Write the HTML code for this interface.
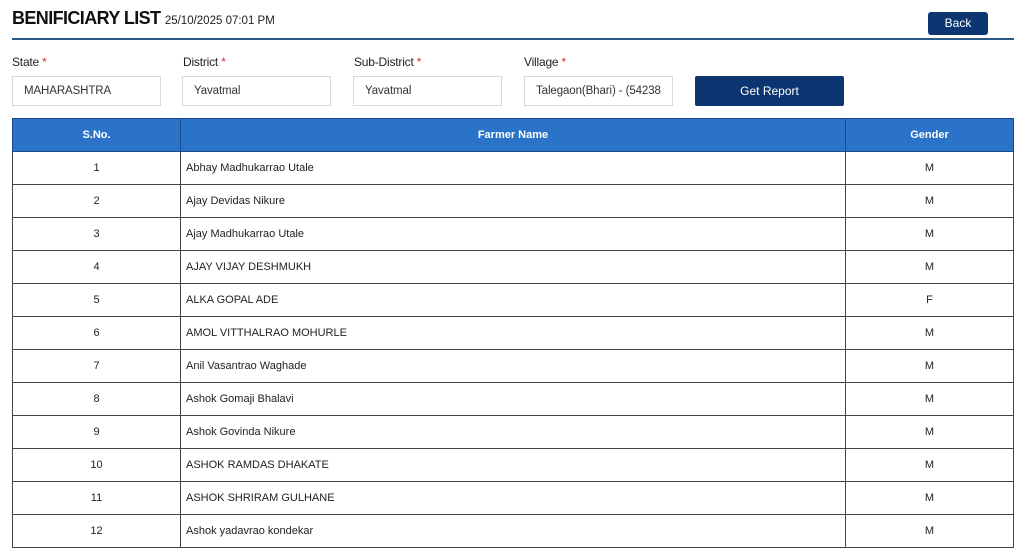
<!DOCTYPE html>
<html><head><style>
*{margin:0;padding:0;box-sizing:border-box}
body{width:1024px;height:546px;overflow:hidden;background:#fff;font-family:"Liberation Sans",Arial,sans-serif;color:#222;position:relative}
.a{position:absolute}
h1{position:absolute;left:12px;top:8px;font-size:18px;font-weight:bold;color:#111;letter-spacing:-0.6px;white-space:nowrap}
h1 span{font-size:11.5px;font-weight:normal;color:#222;letter-spacing:0}
.line{left:12px;top:38px;width:1002px;height:2px;background:#2b5a85}
.back{left:928px;top:12px;width:60px;height:23px;background:#0d3572;border-radius:3px;color:#fff;font-size:12px;text-align:center;line-height:23px}
.lbl{top:55px;font-size:12px;color:#222;letter-spacing:-0.2px}
.lbl b{color:#d33;font-weight:normal}
.inp{top:76px;width:149px;height:30px;border:1px solid #d8d8d8;font-size:11.5px;line-height:28px;padding-left:11px;color:#333;white-space:nowrap;overflow:hidden;letter-spacing:-0.1px}
.btn{left:695px;top:76px;width:149px;height:30px;background:#0d3572;border-radius:2px;color:#fff;font-size:12px;text-align:center;line-height:30px}
table{position:absolute;left:12px;top:118px;width:1002px;border-collapse:collapse;font-size:11px}
th{background:#2a73c8;color:#fff;height:33px;border:1px solid #1b4a8a;font-weight:bold}
td{height:33px;border:1px solid #444;color:#222}
td.c{text-align:center}
td.n{padding-left:5px}
</style></head><body>
<h1>BENIFICIARY LIST <span>25/10/2025 07:01 PM</span></h1>
<div class="a back">Back</div>
<div class="a line"></div>
<div class="a lbl" style="left:12px">State <b>*</b></div>
<div class="a lbl" style="left:183px">District <b>*</b></div>
<div class="a lbl" style="left:354px">Sub-District <b>*</b></div>
<div class="a lbl" style="left:524px">Village <b>*</b></div>
<div class="a inp" style="left:12px">MAHARASHTRA</div>
<div class="a inp" style="left:182px">Yavatmal</div>
<div class="a inp" style="left:353px">Yavatmal</div>
<div class="a inp" style="left:524px">Talegaon(Bhari) - (54238</div>
<div class="a btn">Get Report</div>
<table>
<tr><th style="width:168px">S.No.</th><th style="width:665px">Farmer Name</th><th>Gender</th></tr>
<tr><td class="c">1</td><td class="n">Abhay Madhukarrao Utale</td><td class="c">M</td></tr>
<tr><td class="c">2</td><td class="n">Ajay Devidas Nikure</td><td class="c">M</td></tr>
<tr><td class="c">3</td><td class="n">Ajay Madhukarrao Utale</td><td class="c">M</td></tr>
<tr><td class="c">4</td><td class="n">AJAY VIJAY DESHMUKH</td><td class="c">M</td></tr>
<tr><td class="c">5</td><td class="n">ALKA GOPAL ADE</td><td class="c">F</td></tr>
<tr><td class="c">6</td><td class="n">AMOL VITTHALRAO MOHURLE</td><td class="c">M</td></tr>
<tr><td class="c">7</td><td class="n">Anil Vasantrao Waghade</td><td class="c">M</td></tr>
<tr><td class="c">8</td><td class="n">Ashok Gomaji Bhalavi</td><td class="c">M</td></tr>
<tr><td class="c">9</td><td class="n">Ashok Govinda Nikure</td><td class="c">M</td></tr>
<tr><td class="c">10</td><td class="n">ASHOK RAMDAS DHAKATE</td><td class="c">M</td></tr>
<tr><td class="c">11</td><td class="n">ASHOK SHRIRAM GULHANE</td><td class="c">M</td></tr>
<tr><td class="c">12</td><td class="n">Ashok yadavrao kondekar</td><td class="c">M</td></tr>
</table>
</body></html>
